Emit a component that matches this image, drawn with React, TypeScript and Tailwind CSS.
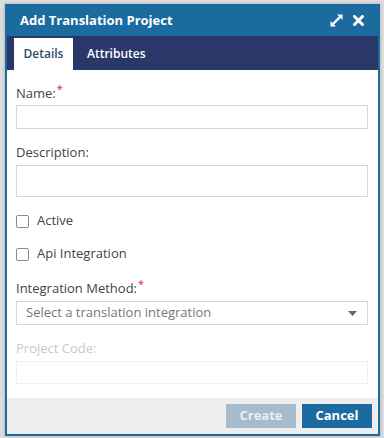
import React from "react";

function ExpandIcon() {
  return (
    <svg width="13" height="13" viewBox="0 0 13 13" className="block">
      <path d="M7 0.5 L12.5 0.5 L12.5 6 Z" fill="white" />
      <path d="M0.5 7 L0.5 12.5 L6 12.5 Z" fill="white" />
      <path d="M3 10 L10 3" stroke="white" strokeWidth="2.4" />
    </svg>
  );
}

function CloseIcon() {
  return (
    <svg width="11" height="11" viewBox="0 0 11 11" className="block">
      <path d="M1.5 1.5 L9.5 9.5 M9.5 1.5 L1.5 9.5" stroke="white" strokeWidth="3" strokeLinecap="round" />
    </svg>
  );
}

function Req() {
  return <span className="text-[#e02020] text-[11px] relative -top-[5px] ml-[1px]">*</span>;
}

export default function App() {
  return (
    <div
      className="w-[384px] h-[438px] bg-[#dcdcdc] pt-[4px] pl-[5px]"
      style={{ fontFamily: '"Open Sans", "Liberation Sans", sans-serif' }}
    >
      <div className="w-[375px] h-[432px] border-2 border-t-0 border-[#1b6aa0] bg-white flex flex-col shadow-[0_0_3px_rgba(0,0,0,0.25)]">
        <div className="h-[32px] bg-[#1b6aa0] flex items-center pl-[13px] pr-[14px] shrink-0">
          <div className="text-white font-bold text-[13px] leading-none flex-1">Add Translation Project</div>
          <div className="flex items-center gap-[10px]">
            <ExpandIcon />
            <CloseIcon />
          </div>
        </div>
        <div className="h-[34px] bg-[#293868] flex items-end pl-[7px] shrink-0">
          <div className="h-[32px] w-[59px] bg-white flex items-center justify-center text-[12px] font-semibold text-[#2f4a66]">
            Details
          </div>
          <div className="h-[32px] pl-[14px] flex items-center text-[12px] font-semibold text-white">
            Attributes
          </div>
        </div>
        <div className="flex-1 pl-[9px] pr-[10px] text-[13px] text-[#444]">
          <div className="mt-[13px] h-[20px] leading-[20px]">
            Name:<Req />
          </div>
          <div className="mt-[2px] h-[24px] border border-[#d6d6d6]" />
          <div className="mt-[13px] h-[20px] leading-[20px]">Description:</div>
          <div className="mt-[3px] h-[32px] border border-[#d6d6d6]" />
          <div className="mt-[14px] h-[20px] flex items-center gap-[8px]">
            <div className="w-[13px] h-[13px] border border-[#8a8a8a] rounded-[2px]" />
            <span>Active</span>
          </div>
          <div className="mt-[13px] h-[20px] flex items-center gap-[8px]">
            <div className="w-[13px] h-[13px] border border-[#8a8a8a] rounded-[2px]" />
            <span>Api Integration</span>
          </div>
          <div className="mt-[14px] h-[20px] leading-[20px]">
            Integration Method:<Req />
          </div>
          <div className="mt-[3px] h-[24px] border border-[#d6d6d6] flex items-center pl-[9px] pr-[10px] text-[#777]">
            <span className="flex-1">Select a translation integration</span>
            <svg width="9" height="5" viewBox="0 0 9 5" className="block">
              <path d="M0 0 L9 0 L4.5 5 Z" fill="#666" />
            </svg>
          </div>
          <div className="mt-[13px] h-[20px] leading-[20px] text-[#c9c9c9]">Project Code:</div>
          <div className="mt-[3px] h-[23px] border border-[#efefef]" />
        </div>
        <div className="h-[36px] bg-[#eeeeee] flex items-start justify-end gap-[6px] pt-[6px] pr-[6px] shrink-0">
          <button className="w-[70px] h-[24px] bg-[#a4bccd] text-[#e8eef2] text-[13px] font-bold">Create</button>
          <button className="w-[70px] h-[24px] bg-[#1b6aa0] text-white text-[13px] font-bold">Cancel</button>
        </div>
      </div>
    </div>
  );
}
